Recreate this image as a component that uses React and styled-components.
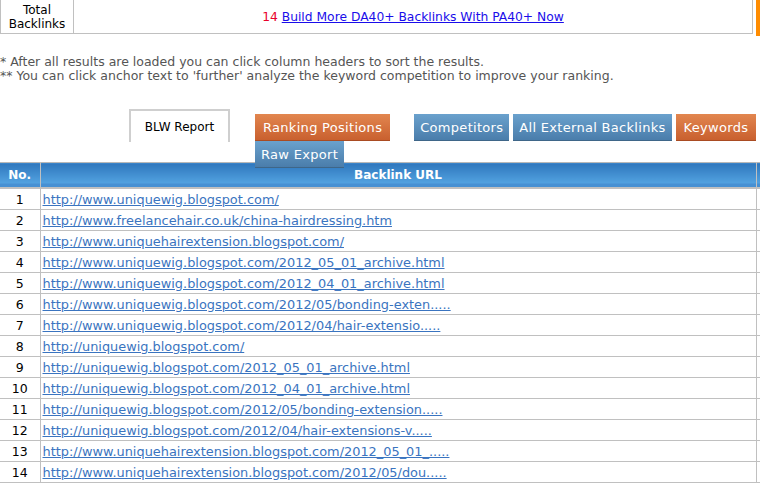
import React from 'react';
import styled, { createGlobalStyle } from 'styled-components';

const GlobalStyle = createGlobalStyle`
  body {
    margin: 0;
    background: #fff;
    font-family: "DejaVu Sans", Verdana, sans-serif;
    font-size: 12px;
  }
`;

const Page = styled.div`
  width: 760px;
  height: 488px;
  overflow: hidden;
`;

const TopRow = styled.div`
  display: flex;
  align-items: flex-start;
`;

const Summary = styled.table`
  width: 753px;
  border-collapse: collapse;
  td {
    border: 1px solid #c0c0c0;
    border-top: none;
    height: 33px;
    padding: 0;
  }
`;

const SummaryLabel = styled.td`
  width: 72px;
  text-align: center;
  line-height: 14px;
  color: #000;
`;

const SummaryValue = styled.td`
  text-align: center;
  color: #000;
  font-size: 12.3px;
`;

const Count = styled.span`
  color: #e8002a;
`;

const BuildLink = styled.a`
  color: #1a0dea;
  text-decoration: underline;
`;

const Stripe = styled.div`
  width: 4px;
  height: 36px;
  margin-left: 3px;
  background: #ff8c00;
`;

const Notes = styled.div`
  margin-top: 19px;
  color: #555;
  font-size: 12.5px;
  line-height: 13.5px;
`;

const TabBar = styled.div`
  display: flex;
  align-items: flex-start;
  height: 53px;
  margin-top: 27px;
  padding-left: 129px;
`;

const Tab = styled.div`
  flex-shrink: 0;
  width: 97px;
  height: 31px;
  border: 2px solid #cfcfcf;
  border-bottom: none;
  line-height: 33px;
  text-align: center;
  color: #000;
`;

const Buttons = styled.div`
  flex-shrink: 0;
  display: flex;
  flex-wrap: wrap;
  width: 520px;
  margin-left: 25px;
  margin-top: 5px;
  position: relative;
  z-index: 2;
`;

const Button = styled.div`
  height: 26px;
  padding: 0 ${p => (p.$orange ? 8 : 6)}px;
  margin-right: ${p => p.$gap || 4}px;
  line-height: 27px;
  color: #fff;
  font-size: 13px;
  letter-spacing: 0.3px;
  white-space: nowrap;
  border-bottom: 1px solid ${p => (p.$orange ? '#a94b22' : '#3f6688')};
  background: ${p =>
    p.$orange
      ? 'linear-gradient(#e2864f, #c9602f)'
      : 'linear-gradient(#6aa1cd, #4a7dab)'};
`;

const Grid = styled.table`
  width: 790px;
  border-collapse: collapse;
  table-layout: fixed;
  th {
    height: 24px;
    padding: 0;
    color: #fff;
    font-weight: bold;
    border: 1px solid #c0c0c0;
    border-top: 1px solid #b8b8b8;
    border-bottom: 2px solid #c0c0c0;
    background: linear-gradient(#2f77bd, #53a3e1 85%, #4690d3 85%);
    text-align: center;
  }
  td {
    height: 20px;
    padding: 0;
    border: 1px solid #c0c0c0;
  }
  th:first-child,
  td:first-child {
    border-left: none;
  }
`;

const NumCell = styled.td`
  text-align: center;
  color: #000;
  font-size: 12.5px;
`;

const UrlCell = styled.td`
  padding-left: 2px !important;
  white-space: nowrap;
  overflow: hidden;
  font-size: 12.9px;
`;

const UrlLink = styled.a`
  color: #3a74c0;
  text-decoration: underline;
`;

const rows = [
  'http://www.uniquewig.blogspot.com/',
  'http://www.freelancehair.co.uk/china-hairdressing.htm',
  'http://www.uniquehairextension.blogspot.com/',
  'http://www.uniquewig.blogspot.com/2012_05_01_archive.html',
  'http://www.uniquewig.blogspot.com/2012_04_01_archive.html',
  'http://www.uniquewig.blogspot.com/2012/05/bonding-exten.....',
  'http://www.uniquewig.blogspot.com/2012/04/hair-extensio.....',
  'http://uniquewig.blogspot.com/',
  'http://uniquewig.blogspot.com/2012_05_01_archive.html',
  'http://uniquewig.blogspot.com/2012_04_01_archive.html',
  'http://uniquewig.blogspot.com/2012/05/bonding-extension.....',
  'http://uniquewig.blogspot.com/2012/04/hair-extensions-v.....',
  'http://www.uniquehairextension.blogspot.com/2012_05_01_.....',
  'http://www.uniquehairextension.blogspot.com/2012/05/dou.....',
];

export default function App() {
  return (
    <Page>
      <GlobalStyle />
      <TopRow>
        <Summary>
          <tbody>
            <tr>
              <SummaryLabel>Total<br />Backlinks</SummaryLabel>
              <SummaryValue>
                <Count>14</Count> <BuildLink href="#">Build More DA40+ Backlinks With PA40+ Now</BuildLink>
              </SummaryValue>
            </tr>
          </tbody>
        </Summary>
        <Stripe />
      </TopRow>
      <Notes>
        * After all results are loaded you can click column headers to sort the results.<br />
        ** You can click anchor text to 'further' analyze the keyword competition to improve your ranking.
      </Notes>
      <TabBar>
        <Tab>BLW Report</Tab>
        <Buttons>
          <Button $orange $gap={24}>Ranking Positions</Button>
          <Button>Competitors</Button>
          <Button>All External Backlinks</Button>
          <Button $orange>Keywords</Button>
          <Button>Raw Export</Button>
        </Buttons>
      </TabBar>
      <Grid>
        <colgroup>
          <col style={{ width: 40 }} />
          <col style={{ width: 716 }} />
          <col />
        </colgroup>
        <thead>
          <tr>
            <th>No.</th>
            <th>Backlink URL</th>
            <th></th>
          </tr>
        </thead>
        <tbody>
          {rows.map((url, i) => (
            <tr key={url}>
              <NumCell>{i + 1}</NumCell>
              <UrlCell><UrlLink href="#">{url}</UrlLink></UrlCell>
              <td></td>
            </tr>
          ))}
        </tbody>
      </Grid>
    </Page>
  );
}
